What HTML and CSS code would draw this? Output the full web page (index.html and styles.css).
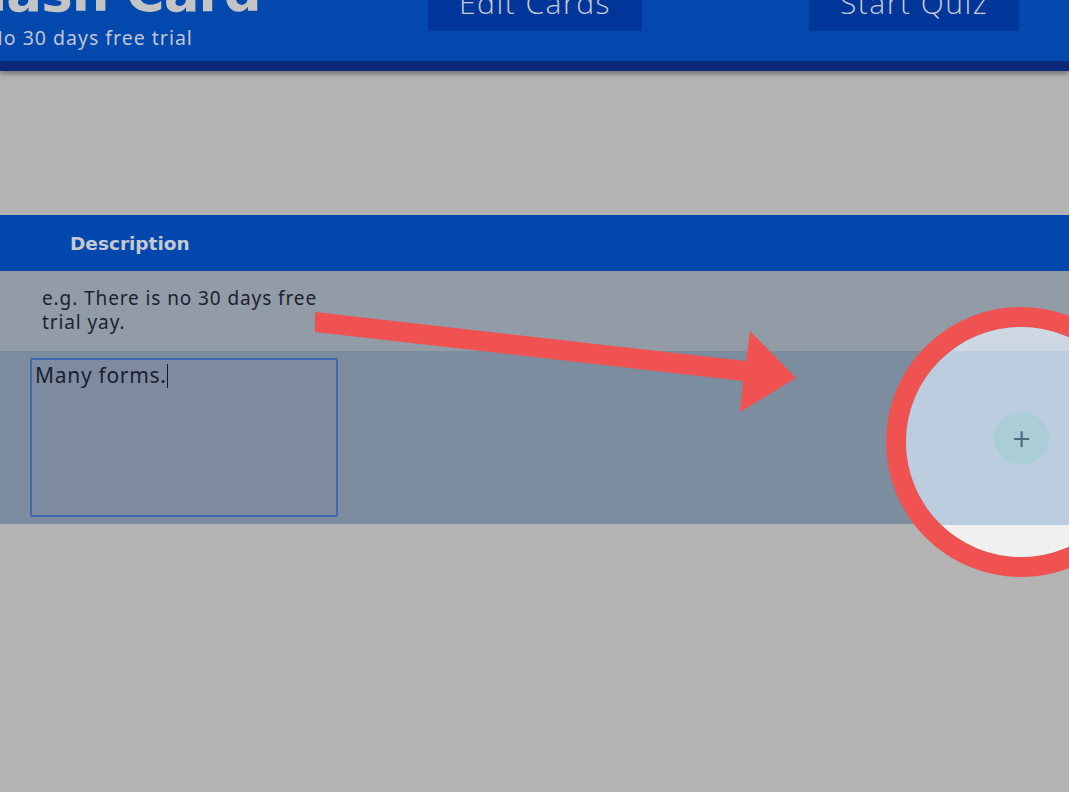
FILE: index.html
```html
<!DOCTYPE html>
<html>
<head>
<meta charset="utf-8">
<link rel="stylesheet" href="styles.css">
</head>
<body>
<div class="page">
  <header class="topbar">
    <div class="brand">
      <h1 class="title">Flash Card</h1>
      <p class="subtitle">No 30 days free trial</p>
    </div>
    <nav class="nav">
      <a class="btn btn-edit">Edit Cards</a>
      <a class="btn btn-quiz">Start Quiz</a>
    </nav>
  </header>

  <main class="content">
    <div class="table">
      <div class="thead">
        <div class="th">Description</div>
      </div>
      <div class="row row-example">
        <div class="cell-text">e.g. There is no 30 days free trial yay.</div>
      </div>
      <div class="row row-edit">
        <div class="textarea">Many forms.<span class="caret"></span></div>
      </div>
    </div>
  </main>

  <svg class="arrow" width="1069" height="792" viewBox="0 0 1069 792">
    <polygon points="315,312 746,361 750,331 796,378 740,412 743,381 315,332" fill="#f05252"/>
  </svg>

  <div class="spotlight">
    <div class="spot-band band-row1"></div>
    <div class="spot-band band-row2"></div>
    <div class="spot-band band-bg"></div>
    <button class="add-btn">+</button>
  </div>
</div>
</body>
</html>
```

FILE: styles.css
```css
html, body {
  margin: 0;
  padding: 0;
}
body {
  background: #b3b3b3;
  overflow: hidden;
  font-family: "Noto Sans", "Open Sans", sans-serif;
}
.page {
  position: relative;
  width: 1069px;
  height: 792px;
  overflow: hidden;
}
.topbar {
  display: flex;
  align-items: flex-start;
  height: 61px;
  background: #0248ad;
  border-bottom: 10px solid #0c2878;
  box-shadow: 0 3px 5px rgba(0, 0, 0, 0.35);
}
.brand {
  margin-left: -46px;
  width: 474px;
  flex-shrink: 0;
}
.title {
  margin: -35px 0 0 0;
  font-family: "DejaVu Sans", sans-serif;
  font-weight: bold;
  font-size: 53px;
  line-height: 56px;
  color: #c4c4c4;
  letter-spacing: -1px;
  white-space: nowrap;
}
.subtitle {
  margin: 5px 0 0 34px;
  font-size: 19.5px;
  line-height: 24px;
  letter-spacing: 1px;
  color: #c0c6d6;
  white-space: nowrap;
}
.nav {
  display: flex;
  gap: 167px;
}
.btn {
  display: flex;
  justify-content: center;
  align-items: flex-end;
  box-sizing: content-box;
  height: 21px;
  padding-bottom: 10px;
  background: #00369a;
  color: #c9ccd6;
  font-family: "Open Sans", "Noto Sans", sans-serif;
  font-size: 30px;
  line-height: 36px;
  letter-spacing: 1.5px;
  font-weight: 300;
  overflow: hidden;
  white-space: nowrap;
}
.btn-edit {
  width: 214px;
}
.btn-quiz {
  width: 210px;
}
.content {
  margin-top: 144px;
}
.thead {
  display: flex;
  align-items: center;
  height: 56px;
  background: #0147ae;
}
.th {
  padding-left: 70px;
  font-family: "DejaVu Sans", sans-serif;
  font-weight: bold;
  font-size: 18.5px;
  color: #c7c9cf;
  letter-spacing: 0;
}
.row-example {
  height: 80px;
  background: #929ca7;
  box-sizing: border-box;
  padding: 15px 0 0 42px;
}
.cell-text {
  width: 295px;
  font-size: 19px;
  line-height: 24px;
  letter-spacing: 0.9px;
  color: #1d2230;
}
.row-edit {
  height: 173px;
  background: #7b8d9e;
  box-sizing: border-box;
  padding: 7px 0 0 30px;
}
.textarea {
  width: 308px;
  height: 159px;
  box-sizing: border-box;
  border: 2px solid #3f68ae;
  border-radius: 2px;
  background: #7e8aa0;
  padding: 2px 3px;
  font-size: 21px;
  line-height: 26px;
  letter-spacing: 0.7px;
  color: #1a1f2c;
}
.caret {
  display: inline-block;
  width: 1px;
  height: 24px;
  background: #0f1830;
  vertical-align: -5px;
}
.arrow {
  position: absolute;
  left: 0;
  top: 0;
  pointer-events: none;
}
.spotlight {
  position: absolute;
  left: 886px;
  top: 307px;
  width: 230px;
  height: 230px;
  border: 20px solid #f05252;
  border-radius: 50%;
  overflow: hidden;
  display: flex;
  flex-direction: column;
}
.spot-band {
  flex-shrink: 0;
}
.band-row1 {
  height: 24px;
  background: #cdd8e3;
}
.band-row2 {
  height: 174px;
  background: #bbcddf;
}
.band-bg {
  flex: 1;
  background: #f0f0f0;
}
.add-btn {
  position: absolute;
  left: 88px;
  top: 85px;
  width: 55px;
  height: 53px;
  border: none;
  border-radius: 50%;
  background: #abcdd6;
  color: #4b6a80;
  font-family: "DejaVu Sans", sans-serif;
  font-size: 24px;
  line-height: 1;
  padding: 0;
}
```
